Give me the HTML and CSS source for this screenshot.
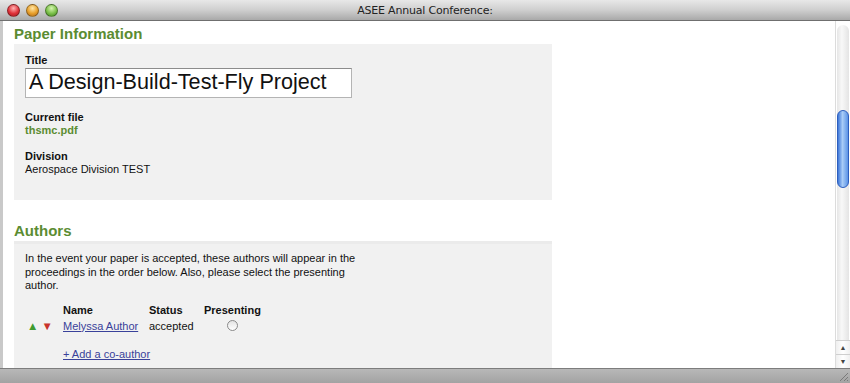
FILE: index.html
```html
<!DOCTYPE html>
<html>
<head>
<meta charset="utf-8">
<link rel="stylesheet" href="styles.css">
</head>
<body>
<div class="window">
  <div class="titlebar">
    <div class="lights">
      <span class="light red"></span>
      <span class="light yellow"></span>
      <span class="light green"></span>
    </div>
    <div class="title">ASEE Annual Conference:</div>
  </div>
  <div class="main">
    <div class="content">
      <h2 class="heading">Paper Information</h2>
      <div class="box box-info">
        <div class="label">Title</div>
        <div class="input">A Design-Build-Test-Fly Project</div>
        <div class="label label-gap">Current file</div>
        <div class="file">thsmc.pdf</div>
        <div class="label label-gap">Division</div>
        <div class="value">Aerospace Division TEST</div>
      </div>
      <h2 class="heading heading-authors">Authors</h2>
      <div class="box box-authors">
        <p class="intro">In the event your paper is accepted, these authors will appear in the proceedings in the order below. Also, please select the presenting author.</p>
        <div class="table">
          <div class="row head">
            <span class="c-arrows"></span>
            <span class="c-name">Name</span>
            <span class="c-status">Status</span>
            <span class="c-pres">Presenting</span>
          </div>
          <div class="row">
            <span class="c-arrows"><span class="up">&#9650;</span><span class="down">&#9660;</span></span>
            <span class="c-name"><a class="link" href="#">Melyssa Author</a></span>
            <span class="c-status">accepted</span>
            <span class="c-pres"><span class="radio"></span></span>
          </div>
        </div>
        <a class="link add" href="#">+ Add a co-author</a>
      </div>
    </div>
    <div class="scrollbar">
      <div class="track">
        <div class="thumb"></div>
      </div>
      <div class="arrow">&#9650;</div>
      <div class="arrow">&#9660;</div>
    </div>
  </div>
  <div class="statusbar">
    <svg class="grip" width="12" height="12" viewBox="0 0 12 12">
      <path d="M11 3 L3 11 M11 7 L7 11 M11 10 L10 11" stroke="#7a7a7a" stroke-width="1" fill="none"/>
    </svg>
  </div>
</div>
</body>
</html>
```
FILE: styles.css
```css
* { box-sizing: border-box; }
html, body { margin: 0; padding: 0; }
body {
  width: 850px;
  height: 383px;
  overflow: hidden;
  font-family: "Liberation Sans", Arial, sans-serif;
  font-size: 11px;
  color: #111;
  background: #fff;
}
.window {
  width: 850px;
  height: 383px;
  display: flex;
  flex-direction: column;
}
.titlebar {
  height: 21px;
  flex: 0 0 21px;
  background: linear-gradient(#e8e8e8, #cfcfcf 50%, #a9a9a9);
  border-bottom: 1px solid #6f6f6f;
  display: flex;
  align-items: center;
  position: relative;
}
.lights {
  display: flex;
  gap: 6px;
  padding-left: 7px;
}
.light {
  width: 13px;
  height: 13px;
  border-radius: 50%;
  border: 1px solid rgba(0,0,0,0.35);
}
.light.red { background: radial-gradient(circle at 50% 30%, #ffb3b3, #e0323a 55%, #9e1a1f); }
.light.yellow { background: radial-gradient(circle at 50% 30%, #ffe6a6, #e8a02c 55%, #a8661a); }
.light.green { background: radial-gradient(circle at 50% 30%, #d6f5b0, #7cc14a 55%, #3f7d20); }
.title {
  position: absolute;
  left: 0;
  right: 0;
  top: 4px;
  text-align: center;
  font-family: "DejaVu Sans", sans-serif;
  font-size: 11px;
  color: #222;
  letter-spacing: -0.2px;
}
.main {
  flex: 1;
  display: flex;
  min-height: 0;
  border-left: 3px solid #c9c9c9;
}
.content {
  flex: 1;
  overflow: hidden;
  padding: 4px 0 0 11px;
  background: #fff;
}
.heading {
  margin: 0;
  font-size: 15px;
  font-weight: bold;
  color: #5b8c32;
  line-height: 18px;
  height: 19px;
}
.heading-authors { margin-top: 22px; }
.box {
  width: 538px;
  background: #f1f1f1;
  padding: 10px 11px 0;
}
.box-info { height: 156px; }
.box-authors {
  border-top: 3px solid #ebebeb;
  height: 140px;
  padding-top: 8px;
}
.label {
  font-weight: bold;
  line-height: 13px;
}
.label-gap { margin-top: 13px; }
.input {
  width: 327px;
  height: 30px;
  margin-top: 1px;
  background: #fff;
  border: 1px solid #b4b4b4;
  border-top-color: #8c8c8c;
  font-size: 21.6px;
  line-height: 26px;
  padding-left: 3px;
  color: #111;
}
.file {
  font-weight: bold;
  color: #5b8c32;
  line-height: 13px;
}
.value { line-height: 13px; }
.intro {
  margin: 0;
  width: 340px;
  line-height: 13.5px;
}
.table { margin-top: 10px; }
.row {
  display: flex;
  align-items: center;
  height: 16px;
}
.row.head { font-weight: bold; height: 15px; }
.c-arrows { width: 38px; display: flex; gap: 3px; padding-left: 2px; font-size: 11.5px; }
.c-name { width: 86px; }
.c-status { width: 55px; }
.c-pres { width: 70px; display: flex; justify-content: flex-start; }
.up { color: #3f9a2f; }
.down { color: #c8332c; }
.link {
  color: #39419a;
  text-decoration: underline;
}
.radio {
  width: 11px;
  height: 11px;
  margin-left: 23px;
  border-radius: 50%;
  border: 1px solid #8a8a8a;
  background: linear-gradient(#e4e4e4, #fff);
}
.add {
  display: inline-block;
  margin-top: 14px;
  margin-left: 38px;
}
.scrollbar {
  width: 15px;
  flex: 0 0 15px;
  background: #fff;
  border-left: 1px solid #dcdcdc;
  display: flex;
  flex-direction: column;
}
.track {
  flex: 1;
  background: linear-gradient(90deg, #e6e6e6, #f8f8f8 40%, #e4e4e4);
  border-radius: 6px 6px 0 0;
  padding-top: 85px;
  margin: 4px 1px 0;
}
.thumb {
  width: 12px;
  height: 78px;
  border-radius: 6px;
  border: 1px solid #2d5fbf;
  background: linear-gradient(90deg, #3e77d8, #a8ccf7 45%, #5c94e6);
}
.arrow {
  height: 14px;
  font-size: 7px;
  text-align: center;
  line-height: 14px;
  color: #444;
  border-top: 1px solid #cfcfcf;
  background: linear-gradient(90deg, #efefef, #fff, #efefef);
}
.statusbar {
  height: 15px;
  flex: 0 0 15px;
  background: linear-gradient(#b8b8b8, #a3a3a3);
  border-top: 1px solid #7d7d7d;
  display: flex;
  justify-content: flex-end;
  align-items: flex-end;
}
.grip { margin: 0 1px 1px 0; }
```
